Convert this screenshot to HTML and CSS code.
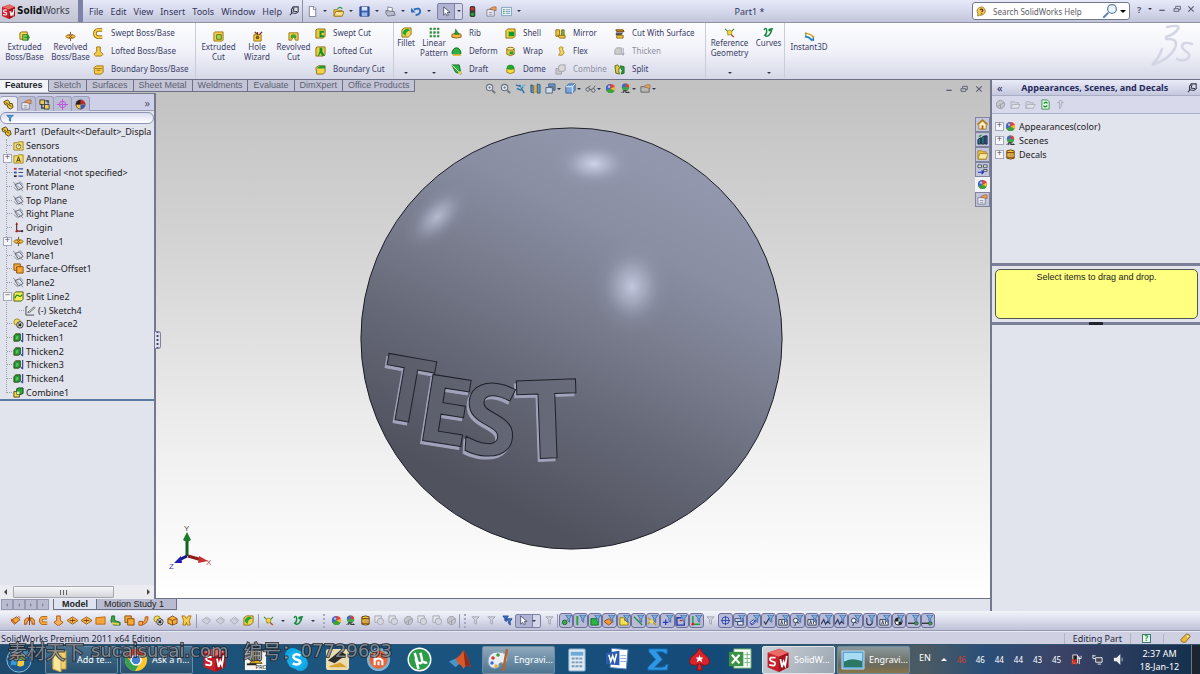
FILE: index.html
```html
<!DOCTYPE html>
<html lang="en">
<head>
<meta charset="utf-8">
<title>SolidWorks - Part1</title>
<link rel="stylesheet" href="styles.css">
</head>
<body>
<svg class="defs" aria-hidden="true">
  <symbol id="ext" viewBox="0 0 12 12"><path d="M1 2l2-1h6v6l-2 2H1z" fill="#f6d85a" stroke="#8c6b12"/><path d="M4 4h6v6H4z" fill="#8fce4a" stroke="#3c7a1c"/><path d="M6 7h5M9 5l2 2-2 3" fill="none" stroke="#1a8f2a" stroke-width="1.5"/></symbol>
  <symbol id="rev" viewBox="0 0 12 12"><path d="M6 1v10" stroke="#6b4b10"/><ellipse cx="6" cy="6" rx="5" ry="2" fill="#f3c23a" stroke="#a0660f"/><path d="M4 4l4 4M8 4L4 8" stroke="#8c4a10"/></symbol>
  <symbol id="swept" viewBox="0 0 12 12"><path d="M10 2H6a4 4 0 000 8h4" fill="none" stroke="#9b7412" stroke-width="4"/><path d="M10 2H6a4 4 0 000 8h4" fill="none" stroke="#f8d048" stroke-width="2.2"/></symbol>
  <symbol id="loft" viewBox="0 0 12 12"><path d="M4 1h4v5l3 3-2 2H3L1 9l3-3z" fill="#f6cd4a" stroke="#9b7412"/></symbol>
  <symbol id="bound" viewBox="0 0 12 12"><path d="M1 4l3-2h7v7l-2 2H2z" fill="#f6cd4a" stroke="#9b7412"/><path d="M2 5h8M4 7h4" stroke="#9b7412"/></symbol>
  <symbol id="excut" viewBox="0 0 12 12"><path d="M1 2l1-1h9v9l-1 1H1z" fill="#f6cd4a" stroke="#9b7412"/><path d="M4 4h5v5H4z" fill="#a8d84c" stroke="#4a7a1c"/></symbol>
  <symbol id="hole" viewBox="0 0 12 12"><path d="M2 4h8v7H2z" fill="#f6cd4a" stroke="#9b7412"/><circle cx="6" cy="7" r="2" fill="#7a5a10"/><path d="M6 1v3M8 4l3-3M3 1l2 2" stroke="#7a2b1a" stroke-width="1.4"/></symbol>
  <symbol id="revcut" viewBox="0 0 12 12"><path d="M1 2h10v8H8L7 7H5l-1 3H1z" fill="#f6cd4a" stroke="#9b7412"/><path d="M3 5q3-3 6 0v3H7L6 6 5 8H3z" fill="#35a832"/></symbol>
  <symbol id="swcut" viewBox="0 0 12 12"><path d="M1 2l2-1h8v8l-2 2H1z" fill="#f2c83c" stroke="#8c6b12"/><path d="M10 4H6v5h4" fill="none" stroke="#169430" stroke-width="2.2"/></symbol>
  <symbol id="locut" viewBox="0 0 12 12"><path d="M1 2l2-1h8v8l-2 2H1z" fill="#e8cf3c" stroke="#8c6b12"/><path d="M5 2h3v4l3 5H8L6 8l-2 3H3l2-5z" fill="#14912c"/></symbol>
  <symbol id="bocut" viewBox="0 0 12 12"><path d="M1 4l3-2h7v7l-2 2H2z" fill="#f2d24a" stroke="#8c6b12"/><path d="M2 5l3-3h6v3z" fill="#1f9e38"/></symbol>
  <symbol id="fillet" viewBox="0 0 12 12"><path d="M1 3l3-2h7v7l-3 3H1z" fill="#f2d24a" stroke="#8c6b12"/><path d="M2 7q0-5 6-5l2 2q-5 0-5 6z" fill="#1fa838"/></symbol>
  <symbol id="pat" viewBox="0 0 12 12"><path d="M1 1h2v2H1zM5 1h2v2H5zM9 1h2v2H9zM1 5h2v2H1zM5 5h2v2H5zM9 5h2v2H9zM1 9h2v2H1zM5 9h2v2H5zM9 9h2v2H9z" fill="#2f8e36" stroke="#2f8e36" stroke-width=".5"/></symbol>
  <symbol id="rib" viewBox="0 0 12 12"><path d="M1 7l5-2 5 2v3l-5 1-5-1z" fill="#f2b93c" stroke="#8c5b12"/><path d="M5 1l4 6H4z" fill="#22a03a" stroke="#146020" stroke-width=".5"/></symbol>
  <symbol id="deform" viewBox="0 0 12 12"><path d="M1 8q1-6 5-6t5 6l-3 2H3z" fill="#2db043" stroke="#156b25"/><path d="M1 9h10v2H3z" fill="#f2b93c"/></symbol>
  <symbol id="draft" viewBox="0 0 12 12"><path d="M1 1h8l2 10-6-2z" fill="#2db043" stroke="#156b25"/><path d="M1 1l9 9" stroke="#e8f0b0"/><path d="M8 8h3v3H8z" fill="#f2d24a"/></symbol>
  <symbol id="shell" viewBox="0 0 12 12"><path d="M1 3l2-2h8v8l-2 2H1z" fill="#f2d03c" stroke="#8c6b12"/><path d="M4 4h6v5H4z" fill="#129a2a"/></symbol>
  <symbol id="wrap" viewBox="0 0 12 12"><path d="M2 3v6q4 3 8 0V3z" fill="#f2d03c" stroke="#8c6b12"/><ellipse cx="6" cy="3" rx="4" ry="1.6" fill="#fbeaa0" stroke="#8c6b12"/><path d="M5 6h4v3H5z" fill="#1f9e38"/></symbol>
  <symbol id="dome" viewBox="0 0 12 12"><path d="M2 5v4q4 3 8 0V5z" fill="#f8dc3c" stroke="#a07b12"/><path d="M2 5q0-4 4-4t4 4q-4 2-8 0z" fill="#1faa30" stroke="#157024" stroke-width=".5"/></symbol>
  <symbol id="mirror" viewBox="0 0 12 12"><path d="M1 2h4v7H1z" fill="#f2c83c" stroke="#8c6b12"/><path d="M7 2h3v7H7z" fill="#6cba3a" stroke="#8c6b12"/><path d="M3 8h8v3H5z" fill="#f2c83c" stroke="#8c6b12"/></symbol>
  <symbol id="flex" viewBox="0 0 12 12"><path d="M8 1q-5 0-3 3t-1 6h4q3-3 1-5t0-3z" fill="#f8d860" stroke="#a88418"/></symbol>
  <symbol id="comb" viewBox="0 0 12 12"><path d="M1 5h6v6H1z" fill="#ccc" stroke="#a0a0a8"/><path d="M4 2l2-1h5v6l-2 1H4z" fill="#d8d8dc" stroke="#a0a0a8"/></symbol>
  <symbol id="cuts" viewBox="0 0 12 12"><path d="M2 2h8l1 2H3z" fill="#d8902c" stroke="#70450c"/><path d="M2 5h8l-2 3H2z" fill="#555"/><path d="M3 8h7v3H3z" fill="#f2c83c" stroke="#8c6b12"/></symbol>
  <symbol id="thk0" viewBox="0 0 12 12"><path d="M1 4l2-2h5v7H1z" fill="#ccc" stroke="#a4a4ac"/><path d="M10 2v8l-1-2m1 2l1-2" stroke="#99a" fill="none"/></symbol>
  <symbol id="split" viewBox="0 0 12 12"><path d="M1 2l3-1 2 3-1 3 1 4-4-1z" fill="#e6c83a" stroke="#5a6b12"/><path d="M7 2l4 1v7l-3 1 1-4-2-3z" fill="#2ba43a" stroke="#1a6a1a"/></symbol>
  <symbol id="refg" viewBox="0 0 12 12"><path d="M1 2l9 8M11 2L4 9" stroke="#2f8f46" stroke-width="1.2"/><circle cx="6" cy="6" r="2.6" fill="#f4d23c" stroke="#a58012" stroke-width=".7"/><path d="M8 9l3 2" stroke="#d04a2c" stroke-width="1.4"/></symbol>
  <symbol id="curv" viewBox="0 0 12 12"><path d="M1 3q3-3 3 1t-2 5q3 3 6-2t-1-3q-2-2 4-2" fill="none" stroke="#14883a" stroke-width="1.6"/></symbol>
  <symbol id="i3d" viewBox="0 0 12 12"><path d="M1 2l6 2 4 3" stroke="#e0a020" stroke-width="1.6" fill="none"/><path d="M1 6l4 1 4 3" stroke="#2a88c8" stroke-width="2" fill="none"/><path d="M7 10l4 1V7z" fill="#2a78b8"/><path d="M2 2v4M10 6v2" stroke="#3a9a3a"/></symbol>
  <symbol id="doc" viewBox="0 0 12 12"><path d="M2.500.5h5l2 2v9h-7z" fill="#fff" stroke="#7a7f96"/><path d="M7 1v3h3" fill="none" stroke="#7a7f96"/></symbol>
  <symbol id="open" viewBox="0 0 12 12"><path d="M1 4h4l1 1h4v6H1z" fill="#f0c040" stroke="#a07b20"/><path d="M1 11l2-5h9l-2 5z" fill="#fae08a" stroke="#a07b20"/><path d="M5 3q3-3 5 0" stroke="#2aa040" stroke-width="1.5" fill="none"/></symbol>
  <symbol id="save" viewBox="0 0 12 12"><path d="M1 1h10v10H1z" fill="#3560b8" stroke="#1d3c80"/><path d="M3 1h6v4H3z" fill="#d8e4f8"/><path d="M3 7h6v4H3z" fill="#9db8e8"/></symbol>
  <symbol id="print" viewBox="0 0 12 12"><path d="M3 1l5 1v4H3z" fill="#fff" stroke="#7c8196"/><path d="M1 5l9 1 1 4-8 1-2-3z" fill="#b8bccb" stroke="#6c7186"/></symbol>
  <symbol id="undo" viewBox="0 0 12 12"><path d="M3 4q7-3 7 2 0 3-5 4" fill="none" stroke="#2b6cb8" stroke-width="2"/><path d="M0 2v5h5z" fill="#2b6cb8"/></symbol>
  <symbol id="cur" viewBox="0 0 12 12"><path d="M4 1v9l2-2 2 3 1-1-1-3h3z" fill="#fff" stroke="#454b66" stroke-width=".9"/></symbol>
  <symbol id="light" viewBox="0 0 12 12"><rect x="3" y="0" width="6" height="12" rx="2" fill="#3a3a34"/><circle cx="6" cy="3" r="2" fill="#d83020"/><circle cx="6" cy="9" r="2" fill="#28a038"/></symbol>
  <symbol id="prop" viewBox="0 0 12 12"><path d="M1 4h8v7H1z" fill="#f4f4f8" stroke="#7a7f98"/><path d="M4 3q4-3 7-2v4l-5-1z" fill="#e8a060" stroke="#98582a" stroke-width=".7"/><path d="M3 7h4M3 9h4" stroke="#8a8fa8"/></symbol>
  <symbol id="list" viewBox="0 0 12 12"><path d="M.5 1.500h11v9H.5z" fill="#eaf3f6" stroke="#7ba0b8"/><path d="M2 4h2M2 6h2M2 8h2" stroke="#3a8a5a"/><path d="M5 4h5M5 6h5M5 8h5" stroke="#7ba0b8"/></symbol>
  <symbol id="pin" viewBox="0 0 12 12"><path d="M5 1h6v6L8 9 3 8V4z" fill="#dcdfe8" stroke="#33384e" stroke-width="1.300"/><path d="M6 2l-1 4 5 1M4 8l-3 3" fill="none" stroke="#33384e" stroke-width="1.300"/></symbol>
  <symbol id="mag" viewBox="0 0 12 12"><circle cx="5" cy="5" r="3.500" fill="#dfe3ea" stroke="#6b7282" stroke-width="1.200"/><path d="M3.500 5h3M5 3.500v3" stroke="#6b7282" stroke-width=".8"/><path d="M8 8l3 3" stroke="#6b7282" stroke-width="2"/></symbol>
  <symbol id="magl" viewBox="0 0 12 12"><circle cx="8" cy="4" r="3.500" fill="#eaf5fb" stroke="#5f84a8"/><path d="M5 7l-4 4" stroke="#5f84a8" stroke-width="1.6"/></symbol>
  <symbol id="prev" viewBox="0 0 12 12"><path d="M1 2l8 3M5 2l5 9M2 6l5 2" stroke="#2f78a8" stroke-width="1.6"/><path d="M6 5l5-3" stroke="#74b4d4" stroke-width="2"/></symbol>
  <symbol id="sect" viewBox="0 0 12 12"><path d="M1 2l3 1v8l-3-1z" fill="#4a8fc0" stroke="#2f5a80"/><path d="M4 2h4v9H4z" fill="#e0a848"/><path d="M8 1l3 1v9H8z" fill="#5ca0cc" stroke="#2f5a80"/></symbol>
  <symbol id="cube" viewBox="0 0 12 12"><path d="M1 4l3-3h7v7l-3 3H1z" fill="#7ba6dc" stroke="#3b5f90"/><path d="M1 4h7v7M8 4l3-3" fill="none" stroke="#e8f2fc"/></symbol>
  <symbol id="views" viewBox="0 0 12 12"><path d="M1 5h7v6H1z" fill="#cfdcec" stroke="#4a6080"/><path d="M4 1h7v7H9V4H4z" fill="#6b94c8" stroke="#4a6080"/></symbol>
  <symbol id="glas" viewBox="0 0 12 12"><circle cx="3" cy="7" r="2" fill="none" stroke="#5a6070"/><circle cx="9" cy="8" r="2" fill="none" stroke="#5a6070"/><path d="M5 7h2M3 5l3-2M9 6l2-3" stroke="#5a6070"/></symbol>
  <symbol id="ball" viewBox="0 0 12 12"><circle cx="6" cy="6" r="5" fill="#e8402c"/><path d="M6 1a5 5 0 00-4.300 7.500L6 6z" fill="#3a6ad0"/><path d="M1.700 8.500A5 5 0 0010.300 8.500L6 6z" fill="#2fa83c"/><path d="M6 6l4.300 2.500A5 5 0 0010.500 4z" fill="#f0c030"/><circle cx="4.500" cy="4" r="1.300" fill="#fff" opacity=".6"/></symbol>
  <symbol id="scene" viewBox="0 0 12 12"><circle cx="6" cy="4.500" r="4" fill="#3aa848"/><path d="M6 .5a4 4 0 014 4H6z" fill="#e04030"/><path d="M2 4.500a4 4 0 014-4v4z" fill="#3c68d0"/><path d="M1 11l3-3h4l3 3z" fill="#333"/><path d="M4 10h2M7 9h2M2 10h1" stroke="#fff"/></symbol>
  <symbol id="decal" viewBox="0 0 12 12"><path d="M2 2q4-2 8 0v8q-4 2-8 0z" fill="#f0c53a" stroke="#5a3a10"/><path d="M2 4h8M2 9h8" stroke="#8a4a18" stroke-width="1.200"/><path d="M4 5h5v3H4z" fill="#c8a850"/></symbol>
  <symbol id="vset" viewBox="0 0 12 12"><path d="M1 4h9v6H1z" fill="#b8b8b8" stroke="#666"/><path d="M4 4q3-3 7-2v4z" fill="#e0a870" stroke="#946038" stroke-width=".7"/></symbol>
  <symbol id="part" viewBox="0 0 12 12"><path d="M1 3l4-2 2 2v2h3l1 4-3 2-3-2V7L2 6z" fill="#f0c63a" stroke="#51400c"/><path d="M3 4l3 2 3 2" stroke="#51400c" fill="none"/></symbol>
  <symbol id="conf" viewBox="0 0 12 12"><path d="M1 1h5v5H1zM6 6h5v5H6z" fill="#f0cf50" stroke="#444"/><path d="M3 6v4h3M7 2h3v3" fill="none" stroke="#333" stroke-width="1.300"/></symbol>
  <symbol id="dimx" viewBox="0 0 12 12"><circle cx="6" cy="6" r="3.500" fill="none" stroke="#c050d8"/><path d="M6 0v12M0 6h12" stroke="#c050d8"/></symbol>
  <symbol id="disp" viewBox="0 0 12 12"><circle cx="6" cy="6" r="5" fill="#f0c840" stroke="#222" stroke-width=".7"/><path d="M1 6a5 5 0 0110 0z" fill="#c82828"/><path d="M1 6a5 5 0 015-5v5z" fill="#222"/><path d="M6 6v5a5 5 0 005-5z" fill="#3658c0"/></symbol>
  <symbol id="fun" viewBox="0 0 12 12"><path d="M1 2h10L7 6v5l-2-1V6z" fill="#4aa0dc" stroke="#1e5f98"/></symbol>
  <symbol id="sens" viewBox="0 0 12 12"><path d="M1 3h4l1-1h5v9H1z" fill="#f4dc70" stroke="#a08420"/><circle cx="6" cy="7" r="2.500" fill="#fff6c8" stroke="#80681c"/><path d="M6 7l1-2" stroke="#333"/></symbol>
  <symbol id="anno" viewBox="0 0 12 12"><path d="M1 3h4l1-1h5v9H1z" fill="#f8e060" stroke="#a08420"/><path d="M4 10l2-6 2 6M4.500 8h3" fill="none" stroke="#3a3210"/></symbol>
  <symbol id="mat" viewBox="0 0 12 12"><path d="M1 1h3v2H1z" fill="#c03030"/><path d="M1 5h3v2H1z" fill="#30509a"/><path d="M1 9h3v2H1z" fill="#303030"/><path d="M6 2h5M6 6h5M6 10h5" stroke="#3a4a9a" stroke-width="1.300"/></symbol>
  <symbol id="plane" viewBox="0 0 12 12"><path d="M2 4l5-2 4 5-5 3z" fill="none" stroke="#555c6a"/><path d="M0 1l11 10M1 7l4 4M7 0l4 4" stroke="#6a7280" stroke-width=".8"/></symbol>
  <symbol id="orig" viewBox="0 0 12 12"><path d="M4 2v8h6" fill="none" stroke="#5a2028" stroke-width="1.200"/><path d="M2.500 3L4 0l1.500 3z" fill="#b02020"/><circle cx="4" cy="10" r="1.300" fill="#b02020"/><circle cx="10" cy="10" r="1.200" fill="#333"/></symbol>
  <symbol id="surf" viewBox="0 0 12 12"><path d="M1 1h7v7H1z" fill="#f0b040" stroke="#8a4a10"/><path d="M4 4h7v7H4z" fill="#f8a830" stroke="#8a4a10"/></symbol>
  <symbol id="spl" viewBox="0 0 12 12"><path d="M1 3l2-2h8v8l-2 2H1z" fill="#f4ec50" stroke="#4a5a10"/><path d="M2 8q2-5 4-3t4-1" fill="none" stroke="#1a8a2a" stroke-width="1.400"/></symbol>
  <symbol id="sk" viewBox="0 0 12 12"><path d="M3 2H1v9h9" fill="none" stroke="#444"/><path d="M3 8l7-6 1 1-6 5z" fill="#fff" stroke="#444" stroke-width=".8"/></symbol>
  <symbol id="delf" viewBox="0 0 12 12"><circle cx="4.500" cy="4.500" r="3.500" fill="#f4dc60" stroke="#9a8420"/><circle cx="7.500" cy="7.500" r="3.500" fill="#e8e8e8" stroke="#333"/><path d="M6 6l3 3M9 6L6 9" stroke="#222" stroke-width="1.200"/></symbol>
  <symbol id="thk" viewBox="0 0 12 12"><path d="M1 4l2-2h5v7l-2 1H1z" fill="#1f9a34" stroke="#3a4510"/><path d="M3 5l3-1v3L3 9z" fill="#54c060"/><path d="M10.500 1v10M9 9l1.500 2" stroke="#3450a8" stroke-width="1.400"/></symbol>
  <symbol id="cmb" viewBox="0 0 12 12"><path d="M1 5h6v6H1z" fill="#f4d850" stroke="#5a4510"/><path d="M4 2l2-1h5v6l-2 1H4z" fill="#29a33c" stroke="#124a1c"/><path d="M4 5h3v3H4z" fill="#e8f0a0"/></symbol>
  <symbol id="home" viewBox="0 0 12 12"><path d="M2 6v5h8V6L6 2z" fill="#fff0c0" stroke="#9a7420"/><path d="M0 6l6-5 6 5" fill="none" stroke="#b08020" stroke-width="1.400"/><path d="M5 7h2v4H5z" fill="#a06020"/></symbol>
  <symbol id="lib" viewBox="0 0 12 12"><path d="M1 6l3-2v7H1zM5 4l3-2v9H5z" fill="#1d7a8a" stroke="#20283a"/><path d="M9 2h2v9H9z" fill="#3a5ab8" stroke="#20283a"/><path d="M2 3l3-2" stroke="#2a9a40" stroke-width="1.500"/></symbol>
  <symbol id="fold" viewBox="0 0 12 12"><path d="M1 2h4l1 1h4v8H1z" fill="#e8c050" stroke="#a88428"/><path d="M1 11l2-6h9l-2 6z" fill="#fbe8a0" stroke="#a88428"/></symbol>
  <symbol id="pal" viewBox="0 0 12 12"><path d="M1 1h4v3H1zM7 1h4v3H7zM7 6h4v2H7z" fill="#f0e8b0" stroke="#445078"/><path d="M1 9h6M5 7l2 2-2 2" fill="none" stroke="#2030c0" stroke-width="1.300"/></symbol>
  <symbol id="gf" viewBox="0 0 12 12"><path d="M1 3h4l1 1h3v6H1z" fill="#d2d3dc" stroke="#aeb0bd"/><path d="M1 10l2-4h8l-2 4z" fill="#e4e5ec" stroke="#aeb0bd"/></symbol>
  <symbol id="gb" viewBox="0 0 12 12"><circle cx="6" cy="6" r="4.500" fill="#c4c5cd" stroke="#9c9eaa"/><path d="M6 6l4-2M6 6L2 9M6 6v4" stroke="#9c9eaa"/></symbol>
  <symbol id="ref" viewBox="0 0 12 12"><path d="M2 1h6l2 2v8H2z" fill="#e8f8ea" stroke="#3a8a4a"/><path d="M4 5q3-3 4 0M8 7q-3 3-4 0" fill="none" stroke="#169430" stroke-width="1.500"/></symbol>
  <symbol id="up" viewBox="0 0 12 12"><path d="M5 11V4H3l3-3 3 3H7v4z" fill="#d4d5dc" stroke="#aaacb8"/></symbol>
  <symbol id="o1" viewBox="0 0 12 12"><path d="M1 6l6-4 4 3-6 5z" fill="#f4a43a" stroke="#9a4a10"/><path d="M1 4l5 5M9 1l2 2" stroke="#c03818"/></symbol>
  <symbol id="o2" viewBox="0 0 12 12"><path d="M0 10q0-7 5-7v3q-2 0-2 4zM12 10q0-7-5-7v3q2 0 2 4z" fill="#f4a43a" stroke="#9a4a10"/><path d="M6 0v11" stroke="#7a2a10"/></symbol>
  <symbol id="o3" viewBox="0 0 12 12"><path d="M10 3H6a3 3 0 000 6h4" fill="none" stroke="#a8550e" stroke-width="3.800"/><path d="M10 3H6a3 3 0 000 6h4" fill="none" stroke="#f9ab3c" stroke-width="2"/></symbol>
  <symbol id="o4" viewBox="0 0 12 12"><path d="M4 1h4v5l3 2-5 4-5-4 3-2z" fill="#f6b058" stroke="#a8550e"/></symbol>
  <symbol id="o5" viewBox="0 0 12 12"><path d="M0 6l6-4 6 4-6 4z" fill="#f8b848" stroke="#9a5a10"/><path d="M3 6h6M6 4v4" stroke="#7a3a10"/></symbol>
  <symbol id="o6" viewBox="0 0 12 12"><path d="M1 3l10-1v8H1z" fill="#f8a43a" stroke="#b86812"/></symbol>
  <symbol id="o7" viewBox="0 0 12 12"><path d="M2 1h3v5l6 2v3H4L1 7z" fill="#34a844" stroke="#1c6a28"/><path d="M2 9l8 1" stroke="#f8c848" stroke-width="2"/></symbol>
  <symbol id="o8" viewBox="0 0 12 12"><path d="M2 9q6 0 6-7h3q0 9-9 9z" fill="#f8a43a" stroke="#a8550e"/><path d="M1 7h4v4H1z" fill="#f8b858" stroke="#a8550e"/></symbol>
  <symbol id="o9" viewBox="0 0 12 12"><path d="M1 4l5-3 5 3v5l-5 2-5-2z" fill="#f4b03a" stroke="#8a4a10"/><path d="M1 4l5 2 5-2M6 6v5" fill="none" stroke="#8a4a10"/></symbol>
  <symbol id="o10" viewBox="0 0 12 12"><path d="M1 1h3l2 3 2-3h3L9 6l1 5H7L6 8l-1 3H2l1-5z" fill="#fbcf4a" stroke="#a8750e"/></symbol>
  <symbol id="g1" viewBox="0 0 12 12"><path d="M1 6l4-3 5 4-4 3zM6 2l5 4" fill="#d0d1da" stroke="#a9abb8"/></symbol>
  <symbol id="g2" viewBox="0 0 12 12"><path d="M1 1h7v7H1z" fill="#e4e4ec" stroke="#a4a6b4"/><circle cx="7" cy="7" r="3.500" fill="#d4d5de" stroke="#a4a6b4"/></symbol>
  <symbol id="gfun" viewBox="0 0 12 12"><path d="M2 2h8L7 5v5L5 9V5z" fill="#d4d6e0" stroke="#a4a6b4"/></symbol>
  <symbol id="bfun" viewBox="0 0 12 12"><path d="M1 1h6L5 4v3L3 6V4zM5 4h6L9 7v4L7 9V7z" fill="#3c78c8" stroke="#1c3c88" stroke-width=".8"/></symbol>
  <symbol id="f" viewBox="0 0 12 12"><path d="M5 0h7L9.500 3.500V8L7.500 6.500v-3z" fill="#76b4e4" stroke="#3a5a98" stroke-width=".8"/></symbol>
  <symbol id="f1" viewBox="0 0 12 12"><circle cx="4" cy="8" r="2.500" fill="#36b04a" stroke="#1c5c28"/><use href="#f"/></symbol>
  <symbol id="f2" viewBox="0 0 12 12"><path d="M2.500 1v10" stroke="#22a038" stroke-width="2"/><use href="#f"/></symbol>
  <symbol id="f3" viewBox="0 0 12 12"><path d="M1 4h8v7H1z" fill="#28b83c" stroke="#167024"/><use href="#f"/></symbol>
  <symbol id="f4" viewBox="0 0 12 12"><path d="M0 7l5-3 5 3-5 4z" fill="#f49a30" stroke="#9a4a10"/><use href="#f"/></symbol>
  <symbol id="f5" viewBox="0 0 12 12"><path d="M1 3h5v3h4v5H1z" fill="#f4e050" stroke="#907a18"/><use href="#f"/></symbol>
  <symbol id="f6" viewBox="0 0 12 12"><path d="M1 2l9 9" stroke="#2a8a44" stroke-width="1.500"/><use href="#f"/></symbol>
  <symbol id="f7" viewBox="0 0 12 12"><path d="M1 3l9 8M1 10l5-5" stroke="#b8a018" stroke-width="1.500"/><circle cx="5" cy="7" r="2" fill="#f4e050"/><use href="#f"/></symbol>
  <symbol id="f8" viewBox="0 0 12 12"><path d="M1 8h6M4 5v6" stroke="#2438c8" stroke-width="1.300"/><use href="#f"/></symbol>
  <symbol id="f9" viewBox="0 0 12 12"><path d="M6 3H1v8h8V8" fill="none" stroke="#2438a8" stroke-width="1.500"/><path d="M4 6h3" stroke="#c02838" stroke-width="1.500"/><use href="#f"/></symbol>
  <symbol id="f10" viewBox="0 0 12 12"><path d="M2 1v9h8" fill="none" stroke="#22a038" stroke-width="1.600"/><circle cx="2" cy="10" r="1.500" fill="#c03020"/><use href="#f"/></symbol>
  <symbol id="f11" viewBox="0 0 12 12"><circle cx="6" cy="6" r="4" fill="none" stroke="#3048b0"/><path d="M6 1v10M1 6h10" stroke="#3048b0"/></symbol>
  <symbol id="f12" viewBox="0 0 12 12"><path d="M1 4h9v3H1zM4 7h6v4H4z" fill="#e4e8f4" stroke="#303c70"/><use href="#f"/></symbol>
  <symbol id="f13" viewBox="0 0 12 12"><path d="M1 8l4-3 2 3-4 3z" fill="#dfe4f8" stroke="#2438a8"/><path d="M2 10l8-6" stroke="#2438a8"/><use href="#f"/></symbol>
  <symbol id="f14" viewBox="0 0 12 12"><path d="M1 7l2 3 4-7" fill="none" stroke="#303c50" stroke-width="1.300"/><use href="#f"/></symbol>
  <symbol id="f15" viewBox="0 0 12 12"><path d="M1 5h9v6H1z" fill="#f4f4f8" stroke="#303848"/><path d="M3 10l1-4 1 4M7 6v4" stroke="#303848" fill="none"/><use href="#f"/></symbol>
  <symbol id="f16" viewBox="0 0 12 12"><circle cx="4" cy="6" r="2.500" fill="#f0f2f8" stroke="#303848"/><path d="M4 9l-1 3M5 8l3 1" stroke="#303848"/><use href="#f"/></symbol>
  <symbol id="f17" viewBox="0 0 12 12"><path d="M0 10l3-5 2 5 2-3 3 3" fill="none" stroke="#303c60" stroke-width="1.300"/><use href="#f"/></symbol>
  <symbol id="f18" viewBox="0 0 12 12"><path d="M3 3v5q0 3 3 3t3-3V6" fill="none" stroke="#303c60" stroke-width="1.300"/><use href="#f"/></symbol>
  <symbol id="f19" viewBox="0 0 12 12"><circle cx="6" cy="7" r="4" fill="#fff" stroke="#222"/><path d="M6 3v4H2a4 4 0 014-4zM6 7h4a4 4 0 01-4 4z" fill="#222"/><use href="#f"/></symbol>
  <symbol id="f20" viewBox="0 0 12 12"><path d="M0 9h11" stroke="#222" stroke-width="1.300"/><circle cx="9" cy="9" r="2" fill="#38a848" stroke="#222" stroke-width=".6"/><use href="#f"/></symbol>
  <symbol id="min" viewBox="0 0 12 12"><path d="M2 8h8" stroke="#5c6075" stroke-width="2"/></symbol>
  <symbol id="rest" viewBox="0 0 12 12"><path d="M4 5V2h7v5H9" fill="none" stroke="#5c6075" stroke-width="1.400"/><path d="M1.500 5.500h7v4h-7z" fill="none" stroke="#5c6075" stroke-width="1.400"/></symbol>
  <symbol id="x" viewBox="0 0 12 12"><path d="M2 2l8 8M10 2l-8 8" stroke="#5c6075" stroke-width="1.800"/></symbol>
  <symbol id="sw" viewBox="0 0 30 30"><path d="M2 6L17 1l11 5v18l-12 6L2 24z" fill="#c8202a"/><path d="M2 6l15-5 11 5-12 5z" fill="#ea6a66"/><path d="M16 11l12-5v18l-12 6z" fill="#a3141e"/><path d="M12 12H6q-2 2 0 4l5 2q1 4-2 4l-5-1M18 14l2 10 2-7 2 5 2-12" fill="none" stroke="#fff" stroke-width="2.200"/></symbol>
</svg>

<header class="titlebar">
  <div class="brand"><svg class="i14"><use href="#sw"/></svg><span><b>Solid</b>Works</span></div>
  <nav class="menu">
    <button>File</button><button>Edit</button><button>View</button><button>Insert</button><button>Tools</button><button>Window</button><button>Help</button>
    <button aria-label="Pin menu"><svg class="i10"><use href="#pin"/></svg></button>
  </nav>
  <div class="quick">
    <button aria-label="New"><svg class="i"><use href="#doc"/></svg><i class="caret"></i></button>
    <button aria-label="Open"><svg class="i"><use href="#open"/></svg><i class="caret"></i></button>
    <button aria-label="Save"><svg class="i"><use href="#save"/></svg><i class="caret"></i></button>
    <button aria-label="Print"><svg class="i"><use href="#print"/></svg><i class="caret"></i></button>
    <button aria-label="Undo"><svg class="i"><use href="#undo"/></svg><i class="caret"></i></button>
    <button class="selectbtn" aria-label="Select"><svg class="i"><use href="#cur"/></svg><i class="caret"></i></button>
    <button class="solo" aria-label="Rebuild"><svg class="i"><use href="#light"/></svg></button>
    <button class="solo" aria-label="File properties"><svg class="i"><use href="#prop"/></svg></button>
    <button aria-label="Options"><svg class="i"><use href="#list"/></svg><i class="caret"></i></button>
  </div>
  <h1 class="doc">Part1 *</h1>
  <form class="search">
    <svg class="i" viewBox="0 0 12 12"><path d="M6 1a5 4.500 0 11-2 9l-2 1V8A5 4.500 0 016 1z" fill="#f4cc58" stroke="#a07820"/><path d="M4.500 4.500q1.500-2 3 0 0 1-1.500 2M6 8v1" fill="none" stroke="#6a2a20" stroke-width="1.300"/></svg>
    <input type="text" aria-label="Search SolidWorks Help" placeholder="Search SolidWorks Help">
    <button type="button" aria-label="Search"><svg class="i16"><use href="#magl"/></svg><i class="caret dark"></i></button>
  </form>
  <div class="winctl">
    <button class="help" aria-label="Help">?</button><i class="caret"></i>
    <button aria-label="Minimize"><svg class="i8"><use href="#min"/></svg></button><button aria-label="Restore"><svg class="i8"><use href="#rest"/></svg></button><button aria-label="Close"><svg class="i8"><use href="#x"/></svg></button>
  </div>
</header>

<section class="ribbon" aria-label="Features">
  <button class="big low"><svg class="i"><use href="#ext"/></svg><span>Extruded<br>Boss/Base</span></button>
  <button class="big low"><svg class="i"><use href="#rev"/></svg><span>Revolved<br>Boss/Base</span></button>
  <div class="col end">
    <button><svg class="i"><use href="#swept"/></svg>Swept Boss/Base</button>
    <button><svg class="i"><use href="#loft"/></svg>Lofted Boss/Base</button>
    <button><svg class="i"><use href="#bound"/></svg>Boundary Boss/Base</button>
  </div>
  <button class="big low"><svg class="i"><use href="#excut"/></svg><span>Extruded<br>Cut</span></button>
  <button class="big low"><svg class="i"><use href="#hole"/></svg><span>Hole<br>Wizard</span></button>
  <button class="big low"><svg class="i"><use href="#revcut"/></svg><span>Revolved<br>Cut</span></button>
  <div class="col end">
    <button><svg class="i"><use href="#swcut"/></svg>Swept Cut</button>
    <button><svg class="i"><use href="#locut"/></svg>Lofted Cut</button>
    <button><svg class="i"><use href="#bocut"/></svg>Boundary Cut</button>
  </div>
  <button class="big"><svg class="i"><use href="#fillet"/></svg><span>Fillet</span><i class="caret"></i></button>
  <button class="big"><svg class="i"><use href="#pat"/></svg><span>Linear<br>Pattern</span><i class="caret"></i></button>
  <div class="col">
    <button><svg class="i"><use href="#rib"/></svg>Rib</button>
    <button><svg class="i"><use href="#deform"/></svg>Deform</button>
    <button><svg class="i"><use href="#draft"/></svg>Draft</button>
  </div>
  <div class="col">
    <button><svg class="i"><use href="#shell"/></svg>Shell</button>
    <button><svg class="i"><use href="#wrap"/></svg>Wrap</button>
    <button><svg class="i"><use href="#dome"/></svg>Dome</button>
  </div>
  <div class="col">
    <button><svg class="i"><use href="#mirror"/></svg>Mirror</button>
    <button><svg class="i"><use href="#flex"/></svg>Flex</button>
    <button disabled><svg class="i"><use href="#comb"/></svg>Combine</button>
  </div>
  <div class="col end">
    <button><svg class="i"><use href="#cuts"/></svg>Cut With Surface</button>
    <button disabled><svg class="i"><use href="#thk0"/></svg>Thicken</button>
    <button><svg class="i"><use href="#split"/></svg>Split</button>
  </div>
  <button class="big"><svg class="i"><use href="#refg"/></svg><span>Reference<br>Geometry</span><i class="caret"></i></button>
  <button class="big endb"><svg class="i"><use href="#curv"/></svg><span>Curves</span><i class="caret"></i></button>
  <button class="big low"><svg class="i"><use href="#i3d"/></svg><span>Instant3D</span></button>
  <svg class="ds" viewBox="0 0 48 44" aria-hidden="true"><g fill="none" stroke="#d3d6e4" stroke-width="2.500" stroke-linecap="round"><path d="M18 3q14-3 11 2-3 5-12 8"/><path d="M17 15q13-1 9 9-5 11-23 17 7-7 10-16"/><path d="M43 20q-9-3-10 2 0 3 5 6 5 4 0 7-4 3-10 0"/></g></svg>
</section>

<main class="work">
  <div class="cmdtabs" role="tablist">
    <button role="tab" class="on">Features</button><button role="tab">Sketch</button><button role="tab">Surfaces</button><button role="tab">Sheet Metal</button><button role="tab">Weldments</button><button role="tab">Evaluate</button><button role="tab">DimXpert</button><button role="tab">Office Products</button>
  </div>

  <aside class="left">
    <div class="ptabs">
      <button class="on" aria-label="Feature tree"><svg class="i"><use href="#part"/></svg></button><button aria-label="Properties"><svg class="i"><use href="#prop"/></svg></button><button aria-label="Configurations"><svg class="i"><use href="#conf"/></svg></button><button aria-label="Dimensions"><svg class="i"><use href="#dimx"/></svg></button><button aria-label="Display"><svg class="i"><use href="#disp"/></svg></button>
      <span class="more">»</span>
    </div>
    <label class="filter"><svg class="i8"><use href="#fun"/></svg><input type="text" aria-label="Filter tree"></label>
    <ul class="tree">
      <li class="root"><svg class="i"><use href="#part"/></svg>Part1&nbsp; (Default&lt;&lt;Default&gt;_Displa</li>
      <li><svg class="i"><use href="#sens"/></svg>Sensors</li>
      <li class="plus"><svg class="i"><use href="#anno"/></svg>Annotations</li>
      <li><svg class="i"><use href="#mat"/></svg>Material &lt;not specified&gt;</li>
      <li><svg class="i"><use href="#plane"/></svg>Front Plane</li>
      <li><svg class="i"><use href="#plane"/></svg>Top Plane</li>
      <li><svg class="i"><use href="#plane"/></svg>Right Plane</li>
      <li><svg class="i"><use href="#orig"/></svg>Origin</li>
      <li class="plus"><svg class="i"><use href="#rev"/></svg>Revolve1</li>
      <li><svg class="i"><use href="#plane"/></svg>Plane1</li>
      <li><svg class="i"><use href="#surf"/></svg>Surface-Offset1</li>
      <li><svg class="i"><use href="#plane"/></svg>Plane2</li>
      <li class="plus minus"><svg class="i"><use href="#spl"/></svg>Split Line2</li>
      <li class="sub"><svg class="i"><use href="#sk"/></svg>(-) Sketch4</li>
      <li><svg class="i"><use href="#delf"/></svg>DeleteFace2</li>
      <li><svg class="i"><use href="#thk"/></svg>Thicken1</li>
      <li><svg class="i"><use href="#thk"/></svg>Thicken2</li>
      <li><svg class="i"><use href="#thk"/></svg>Thicken3</li>
      <li><svg class="i"><use href="#thk"/></svg>Thicken4</li>
      <li><svg class="i"><use href="#cmb"/></svg>Combine1</li>
    </ul>
    <div class="hscroll"><button aria-label="Scroll left" class="al"></button><span class="thumb"></span><button aria-label="Scroll right" class="ar"></button></div>
  </aside>

  <section class="view" aria-label="Model view">
    <svg class="model" viewBox="0 0 834 519">
      <defs>
        <linearGradient id="body" x1=".35" y1=".9" x2=".75" y2=".1"><stop offset="0" stop-color="#50525e"/><stop offset=".3" stop-color="#646775"/><stop offset=".55" stop-color="#787c8d"/><stop offset=".78" stop-color="#8a8ea3"/><stop offset="1" stop-color="#9397ad"/></linearGradient>
        <linearGradient id="cut" gradientUnits="userSpaceOnUse" x1="210" y1="0" x2="440" y2="0"><stop offset="0" stop-color="#585b67"/><stop offset="1" stop-color="#6a6d7c"/></linearGradient>
        <radialGradient id="hl"><stop offset="0" stop-color="#cdd3ea"/><stop offset=".35" stop-color="#bcc1d8" stop-opacity=".65"/><stop offset=".7" stop-color="#a4a8c0" stop-opacity=".18"/><stop offset="1" stop-color="#9ca0b8" stop-opacity="0"/></radialGradient>
      </defs>
      <circle cx="415.500" cy="259" r="211" fill="url(#body)" stroke="#1c1e26"/>
      <ellipse cx="438" cy="84" rx="42" ry="25" fill="url(#hl)"/>
      <ellipse cx="281" cy="137" rx="42" ry="23" fill="url(#hl)" opacity=".7" transform="rotate(-45 281 137)"/>
      <ellipse cx="476" cy="207" rx="40" ry="48" fill="url(#hl)" opacity=".85"/>
      <text class="engrave" x="220 258 304 361" y="337 360 374 380" rotate="10 9 4 -2"><tspan font-size="90">T</tspan><tspan font-size="94">E</tspan><tspan font-size="100">S</tspan><tspan font-size="110">T</tspan></text>
    </svg>
    <div class="hud">
      <button aria-label="Zoom to fit"><svg class="i"><use href="#mag"/></svg></button><button aria-label="Zoom to area"><svg class="i"><use href="#mag"/></svg></button><button aria-label="Previous view"><svg class="i"><use href="#prev"/></svg></button><button aria-label="Section view"><svg class="i"><use href="#sect"/></svg></button><button aria-label="View orientation"><svg class="i"><use href="#views"/></svg><i class="caret"></i></button><button aria-label="Display style"><svg class="i"><use href="#cube"/></svg><i class="caret"></i></button><button aria-label="Hide or show"><svg class="i"><use href="#glas"/></svg><i class="caret"></i></button><button aria-label="Edit appearance"><svg class="i"><use href="#ball"/></svg></button><button aria-label="Apply scene"><svg class="i"><use href="#scene"/></svg><i class="caret"></i></button><button aria-label="View settings"><svg class="i"><use href="#vset"/></svg><i class="caret"></i></button>
    </div>
    <div class="docctl"><button aria-label="Minimize document"><svg class="i8"><use href="#min"/></svg></button><button aria-label="Restore document"><svg class="i8"><use href="#rest"/></svg></button><button aria-label="Close document"><svg class="i8"><use href="#x"/></svg></button></div>
    <div class="tasktabs"><button aria-label="Resources"><svg class="i"><use href="#home"/></svg></button><button aria-label="Design library"><svg class="i"><use href="#lib"/></svg></button><button aria-label="File explorer"><svg class="i"><use href="#fold"/></svg></button><button aria-label="View palette"><svg class="i"><use href="#pal"/></svg></button><button class="on" aria-label="Appearances"><svg class="i"><use href="#ball"/></svg></button><button aria-label="Custom properties"><svg class="i"><use href="#prop"/></svg></button></div>
    <svg class="triad" viewBox="0 0 46 48">
      <path d="M19 31V13" stroke="#16601e" stroke-width="3"/><path d="M15 15l4-8 4 8q-4 3-8 0z" fill="#1c7a28"/>
      <path d="M20 31l14 4" stroke="#8a1c1c" stroke-width="3"/><path d="M31 31l9 5-10 2z" fill="#c83030"/>
      <path d="M19 31l-8 4" stroke="#14148a" stroke-width="3"/><path d="M13 31l-7 7 8 0z" fill="#1c1cb0"/>
      <text x="16" y="6" fill="#4a4a4a">Y</text><text x="38" y="40" fill="#b04848">X</text><text x="1" y="44" fill="#3a3ab0">Z</text>
    </svg>
    <button class="grip" aria-label="Resize panel"></button>
  </section>

  <aside class="right">
    <h2><span>«</span>Appearances, Scenes, and Decals<svg class="i10"><use href="#pin"/></svg></h2>
    <div class="rtools"><button aria-label="Appearance" disabled><svg class="i"><use href="#gb"/></svg></button><button aria-label="Folder" disabled><svg class="i"><use href="#gf"/></svg></button><button aria-label="New folder" disabled><svg class="i"><use href="#gf"/></svg></button><button aria-label="Refresh"><svg class="i"><use href="#ref"/></svg></button><button aria-label="Up" disabled><svg class="i"><use href="#up"/></svg></button></div>
    <ul class="rtree">
      <li><svg class="i"><use href="#ball"/></svg>Appearances(color)</li>
      <li><svg class="i"><use href="#scene"/></svg>Scenes</li>
      <li><svg class="i"><use href="#decal"/></svg>Decals</li>
    </ul>
    <p class="drop">Select items to drag and drop.</p>
    <div class="bar2"></div>
  </aside>
</main>

<div class="sheets">
  <div class="nav"><button aria-label="First"></button><button aria-label="Previous"></button><button class="fwd" aria-label="Next"></button><button class="fwd" aria-label="Last"></button></div>
  <button class="sheet on">Model</button><button class="sheet">Motion Study 1</button>
  <span class="edge"></span>
</div>

<div class="tools">
  <div class="set s13">
    <svg class="i"><use href="#o1"/></svg><svg class="i"><use href="#o2"/></svg><svg class="i"><use href="#o3"/></svg><svg class="i"><use href="#o4"/></svg><svg class="i"><use href="#o5"/></svg><svg class="i"><use href="#o5"/></svg><svg class="i"><use href="#o6"/></svg><svg class="i"><use href="#o7"/></svg><svg class="i"><use href="#surf"/></svg><svg class="i"><use href="#o8"/></svg><svg class="i"><use href="#delf"/></svg><svg class="i"><use href="#o9"/></svg><svg class="i"><use href="#o10"/></svg>
  </div>
  <div class="set s4"><svg class="i"><use href="#g1"/></svg><svg class="i"><use href="#g1"/></svg><svg class="i"><use href="#g1"/></svg><svg class="i"><use href="#fillet"/></svg></div>
  <div class="set s2"><svg class="i"><use href="#refg"/></svg><i class="caret"></i><svg class="i"><use href="#curv"/></svg><i class="caret"></i></div>
  <div class="set s9"><svg class="i"><use href="#ball"/></svg><svg class="i"><use href="#scene"/></svg><svg class="i"><use href="#decal"/></svg><svg class="i"><use href="#g2"/></svg><svg class="i"><use href="#g2"/></svg><svg class="i"><use href="#gb"/></svg><svg class="i"><use href="#g2"/></svg><svg class="i"><use href="#g2"/></svg><svg class="i"><use href="#gb"/></svg></div>
  <div class="set s3"><svg class="i"><use href="#gfun"/></svg><svg class="i"><use href="#gfun"/></svg><svg class="i"><use href="#bfun"/></svg></div>
  <button class="selectbtn" aria-label="Select"><svg class="i"><use href="#cur"/></svg><i class="caret"></i></button>
  <div class="set s1"><svg class="i"><use href="#gfun"/></svg></div>
  <div class="filters">
    <button aria-label="Vertices"><svg><use href="#f1"/></svg></button><button aria-label="Edges"><svg><use href="#f2"/></svg></button><button aria-label="Faces"><svg><use href="#f3"/></svg></button><button aria-label="Surfaces"><svg><use href="#f4"/></svg></button><button aria-label="Solids"><svg><use href="#f5"/></svg></button><button aria-label="Axes"><svg><use href="#f6"/></svg></button><button aria-label="Planes"><svg><use href="#f7"/></svg></button><button aria-label="Points"><svg><use href="#f8"/></svg></button><button aria-label="Sketches"><svg><use href="#f9"/></svg></button><button aria-label="Segments"><svg><use href="#f10"/></svg></button><button class="flat" aria-label="Midpoints"><svg><use href="#gfun"/></svg></button><button aria-label="Center marks"><svg><use href="#f11"/></svg></button><button aria-label="Centerlines"><svg><use href="#f12"/></svg></button><button aria-label="Dimensions"><svg><use href="#f13"/></svg></button><button aria-label="Finish"><svg><use href="#f14"/></svg></button><button aria-label="Tolerances"><svg><use href="#f15"/></svg></button><button aria-label="Notes"><svg><use href="#f16"/></svg></button><button aria-label="Datums"><svg><use href="#f15"/></svg></button><button aria-label="Welds"><svg><use href="#f17"/></svg></button><button aria-label="Beads"><svg><use href="#f17"/></svg></button><button aria-label="Targets"><svg><use href="#f16"/></svg></button><button aria-label="Threads"><svg><use href="#f18"/></svg></button><button aria-label="Blocks"><svg><use href="#f15"/></svg></button><button aria-label="Dowels"><svg><use href="#f19"/></svg></button><button aria-label="Connection points"><svg><use href="#f20"/></svg></button><button aria-label="Routing points"><svg><use href="#f20"/></svg></button>
  </div>
</div>

<footer class="status">
  <span class="grow">SolidWorks Premium 2011 x64 Edition</span>
  <span class="cell">Editing Part</span>
  <span class="cell q"><button aria-label="Quick tips">?</button></span>
  <svg class="i" viewBox="0 0 12 12"><path d="M1 7l6-6q4 0 4 3l-5 6q-5 1-5-3z" fill="#e8b840" stroke="#8a6818"/><circle cx="8.500" cy="3.500" r="1" fill="#fff"/></svg>
</footer>

<nav class="taskbar" aria-label="Taskbar">
  <button class="start" aria-label="Start"><svg viewBox="0 0 30 30"><circle cx="15" cy="15" r="13" fill="#1e5a8e" stroke="#8cc4e0"/><path d="M3 12a13 13 0 0124 0q-12 6-24 0z" fill="#7ab8dc" opacity=".5"/><path d="M8 9q3-2 6 0l-1 5q-3-2-6 0z" fill="#e8642c"/><path d="M15 9q3 2 7 0l-1 5q-4 2-7 0z" fill="#8ec43c"/><path d="M7 15q3-2 6 0l-1 6q-3-2-6 0z" fill="#3c9ae0"/><path d="M14 15q3 2 7 0l-1 6q-4 2-7 0z" fill="#f8cc3c"/></svg></button>
  <button class="task"><svg viewBox="0 0 24 24"><path d="M4 3h13v18H4z" fill="#f0d070" stroke="#b89838"/><path d="M4 3l8 4v17l-8-3z" fill="#fae79c" stroke="#c8a848"/></svg>Add te...</button>
  <button class="task"><svg viewBox="0 0 24 24"><circle cx="12" cy="12" r="11" fill="#fbc92e"/><path d="M2.500 6.500A11 11 0 0122 7H12a5 5 0 00-5 6z" fill="#de4132"/><path d="M2 7.500A11 11 0 0011 23l5-8.500A5 5 0 017 14z" fill="#35a150"/><circle cx="12" cy="12" r="5" fill="#3e80d8" stroke="#fff" stroke-width="1.500"/></svg>Ask a n...</button>
  <button class="app" aria-label="SolidWorks"><svg><use href="#sw"/></svg></button>
  <button class="app" aria-label="Pro tool"><svg viewBox="0 0 26 26"><path d="M2 4h22v20H2z" fill="#f4f4f0"/><path d="M10 4l5 1-1 7 6 5H7l4-5z" fill="#e0b030" stroke="#6a5010"/><path d="M4 18h10" stroke="#222" stroke-width="2"/><text x="13" y="23" font-size="6" fill="#222">PRO</text></svg></button>
  <button class="app" aria-label="Skype"><svg viewBox="0 0 26 26"><circle cx="9" cy="9" r="8" fill="#12a5e4"/><circle cx="17" cy="17" r="8" fill="#12a5e4"/><circle cx="13" cy="13" r="10" fill="#17aeec"/><path d="M17 9q-4-3-7 0-1 3 3 4t4 3q-2 4-8 1" fill="none" stroke="#fff" stroke-width="2.600"/></svg></button>
  <button class="app" aria-label="Editor"><svg viewBox="0 0 26 26"><rect x="1" y="2" width="24" height="22" rx="3" fill="#e8dcb0"/><path d="M3 14L16 4l6 4-12 9z" fill="#2c2c2c"/><path d="M4 20l12-4 7 5H6z" fill="#d8a030"/></svg></button>
  <button class="app" aria-label="Hamachi"><svg viewBox="0 0 26 26"><circle cx="13" cy="13" r="12" fill="#7cb4d4"/><circle cx="13" cy="13" r="9.500" fill="#e8643a"/><path d="M9 7v12M9 14q4-4 8 0v5M13 19v-4" fill="none" stroke="#fff" stroke-width="2.200"/></svg></button>
  <button class="app" aria-label="uTorrent"><svg viewBox="0 0 26 26"><circle cx="13" cy="13" r="12.500" fill="#fff"/><circle cx="13" cy="13" r="11" fill="#2c9c48"/><path d="M8 6l3 10q4 2 5-1L14 6M17 15q1 2 4 1M9 12l3 11" fill="none" stroke="#fff" stroke-width="2.600"/></svg></button>
  <button class="app" aria-label="Matlab"><svg viewBox="0 0 26 26"><path d="M1 15l7-3 5 4-5 5z" fill="#4a94c8"/><path d="M8 12q5-3 8-9 3 2 8 18-5-4-8 2-2-5-5-5z" fill="#d8582a"/><path d="M16 3q3 2 8 18-4-3-6-1z" fill="#8c2c1c"/></svg></button>
  <button class="task lit"><svg viewBox="0 0 24 24"><path d="M2 14Q2 4 12 4t9 8q-1 4-5 3t-3 4Q4 23 2 14z" fill="#e8eef4" stroke="#8aa0b8"/><circle cx="7" cy="10" r="1.800" fill="#d03c30"/><circle cx="12" cy="7" r="1.800" fill="#3c9c40"/><circle cx="6" cy="15" r="1.800" fill="#3c6cd0"/><circle cx="10" cy="18" r="1.800" fill="#e8b030"/><path d="M21 1l-4 22" stroke="#b8642c" stroke-width="2.500"/></svg>Engravi...</button>
  <button class="app" aria-label="Calculator"><svg viewBox="0 0 26 26"><rect x="5" y="2" width="17" height="23" rx="1" fill="#dceaf4" stroke="#88a8c4"/><path d="M7 5h13v4H7z" fill="#6ca8d8"/><path d="M8 12h11M8 16h11M8 20h11" stroke="#7c98b4" stroke-width="2" stroke-dasharray="3 1"/></svg></button>
  <button class="app" aria-label="Word"><svg viewBox="0 0 26 26"><path d="M6 2h17v20H6z" fill="#fff" stroke="#5c88c8" transform="rotate(5 13 13)"/><path d="M1 6l14-2v15L1 18z" fill="#2c5cac"/><path d="M4 8l2 7 2-6 2 6 2-8" fill="none" stroke="#fff" stroke-width="1.600"/><path d="M16 9h6M16 12h6M16 15h6" stroke="#88a8d8"/></svg></button>
  <button class="app" aria-label="Sigma"><svg viewBox="0 0 26 26"><path d="M3 2h19v5h-2q-1-2-4-2h-5l6 8-8 8h8q3 0 4-3h2l-1 6H2v-3l8-8-7-8z" fill="#2e98e4" stroke="#166cb4"/></svg></button>
  <button class="app" aria-label="Spades"><svg viewBox="0 0 26 26"><path d="M13 1q2 5 9 10 4 8-4 8-3 0-4-2l2 7h-6l2-7q-1 2-4 2-8 0-4-8 7-5 9-10z" fill="#d8242a" stroke="#8c1014"/><path d="M13 8l1 3h3l-2 2 1 3-3-2-3 2 1-3-2-2h3z" fill="#fff"/></svg></button>
  <button class="app" aria-label="Excel"><svg viewBox="0 0 26 26"><path d="M6 2h18v20H6z" fill="#fff" stroke="#5ca060"/><path d="M1 5h15v15H1z" fill="#3c9244"/><path d="M4 8l8 9M12 8l-8 9" stroke="#fff" stroke-width="2.200"/><path d="M17 8h6M17 12h6M17 16h6M20 5v15" stroke="#78b87c"/></svg></button>
  <button class="task active"><svg><use href="#sw"/></svg>SolidW...</button>
  <button class="task photo"><svg viewBox="0 0 24 24"><path d="M1 3h22v18H1z" fill="#5ca4d4" stroke="#bcd8ec"/><path d="M3 5h18v8H3z" fill="#a8dcf4"/><path d="M3 14q6-5 18-1v6H3z" fill="#2c7864"/></svg>Engravi...</button>
  <div class="tray"><span class="lang">EN</span><i class="caret upc"></i><span class="hot">46</span><span>46</span><span>44</span><span>44</span><span>43</span><span>45</span>
    <svg class="i" viewBox="0 0 12 12"><path d="M2 1h5v9H2z" fill="#222" stroke="#eee"/><path d="M9 3v8M8 2v3h3V2" stroke="#eee" fill="none"/><path d="M1 6l5 5M6 6l-5 5" stroke="#e03020" stroke-width="2"/></svg>
    <svg class="i" viewBox="0 0 12 12"><path d="M4 4h7v5H4z" fill="#445" stroke="#eee"/><path d="M6 11h4M1 1v4h3M1 2h3" stroke="#eee" fill="none"/></svg>
    <svg class="i" viewBox="0 0 12 12"><path d="M1 4h3l4-4v12L4 8H1z" fill="#eee"/><path d="M10 4v4" stroke="#bbb"/></svg>
  </div>
  <time class="clock">2:37 AM<br>18-Jan-12</time>
  <button class="desk" aria-label="Show desktop"></button>
</nav>
<div class="mark"><span class="cjk">素材天下</span><span>sucaisucai.com</span><span class="cjk no">编号：</span><span>07729693</span></div>
</body>
</html>
```
FILE: styles.css
```css
* { box-sizing: border-box; }
html, body { height: 100%; }
body {
  margin: 0;
  display: flex;
  flex-direction: column;
  position: relative;
  min-width: 1000px;
  overflow: hidden;
  background: #e1e3ed;
  color: #222;
  font: 9px/11px "Noto Sans", "Open Sans", "Noto Sans CJK SC", sans-serif;
}
button, input { font: inherit; color: inherit; background: none; border: 0; padding: 0; margin: 0; }
button { display: flex; align-items: center; justify-content: center; white-space: nowrap; }
ul, h1, h2, p { margin: 0; padding: 0; list-style: none; font-weight: normal; font-size: 9px; }
svg { display: block; flex: none; }
.defs { position: absolute; width: 0; height: 0; }
.i { width: 11px; height: 11px; }
.i8 { width: 8px; height: 8px; }
.i10 { width: 10px; height: 10px; }
.i14, .i16 { width: 15px; height: 15px; }
.caret { flex: none; width: 0; height: 0; border: 2px solid transparent; border-top-color: #33384e; border-bottom: 0; }
.caret.dark { border-width: 3px 3px 0; border-top-color: #000; }

/* Title bar */
.titlebar {
  flex: none; height: 23px; display: flex; align-items: center;
  background: linear-gradient(#e6e9f8, #d9dcef 40%, #c3c6da);
  border-bottom: 1px solid #8d91a3;
}
.brand { width: 83px; height: 22px; display: flex; align-items: center; gap: 1px; padding-left: 1px; border-right: 5px solid #7d82a6; font: 10px/12px "DejaVu Sans Condensed", "DejaVu Sans", sans-serif; color: #3b3d48; background: linear-gradient(#d6d8e6, #c3c5d4); }
.brand b { color: #111; }
.menu { display: flex; align-items: center; justify-content: space-between; width: 220px; height: 22px; padding: 0 3px 0 6px; border-right: 1px solid #8d91a3; color: #33365a; }
.quick { display: flex; align-items: center; height: 22px; padding-left: 4px; }
.quick button { width: 26px; justify-content: flex-start; gap: 5px; }
.quick .selectbtn, .selectbtn { width: 26px; height: 17px; padding-left: 2px; gap: 6px; border: 1px solid #7c80a4; border-radius: 2px; background: linear-gradient(90deg, #b0b2d2 66%, #7c80a4 66%, #7c80a4 70%, #d6d8ea 70%); }
.quick .solo { width: 19px; justify-content: center; }
.doc { flex: 1; text-align: center; color: #33365a; }
.search { width: 158px; height: 18px; display: flex; align-items: center; gap: 6px; padding: 0 3px; background: #fff; border: 1px solid #73778c; border-radius: 3px; font-size: 8px; }
.search input { flex: 1; min-width: 0; outline: 0; }
.search input::placeholder { color: #5c5e68; opacity: 1; }
.search button { gap: 3px; }
.winctl { display: flex; align-items: center; justify-content: space-between; width: 70px; padding: 0 5px 4px 7px; }
.help { font-weight: bold; color: #5c6075; }

/* Ribbon */
.ribbon {
  flex: none; height: 57px; display: grid;
  grid-template-columns: 49px 43px 104px 45px 32px 41px 80px 24px 32px 54px 50px 59px 93px 47px 32px 48px 1fr;
  background: linear-gradient(#fdfdff, #f1f2f9 50%, #d6d8e8);
  border-bottom: 1px solid #6d7188;
  color: #3a3c66; line-height: 10px; font-size: 8px;
}
.ribbon .col { display: grid; grid-template-rows: repeat(3, 18px); align-content: start; padding: 1px 0 0 1px; min-width: 0; }
.ribbon .col button { justify-content: flex-start; gap: 7px; }
.ribbon .end, .ribbon .endb { border-right: 1px solid #c9ccd9; }
.ribbon button:disabled { color: #8e909e; }
.big { flex-direction: column; justify-content: flex-start; padding-top: 4px; height: 55px; min-width: 0; }
.big.low { padding-top: 8px; }
.big .caret { margin-top: auto; margin-bottom: 4px; }
.ds { width: 48px; height: 44px; justify-self: end; margin: 1px 3px 0 0; }

/* Work area */
.work { flex: 1; min-height: 0; display: grid; grid-template: 13px minmax(0, 1fr) / 156px minmax(0, 1fr) 210px; background: #c2c2c2; }
.cmdtabs { grid-area: 1 / 1 / 2 / 3; z-index: 1; justify-self: start; display: flex; font: 9px/11px "Liberation Sans", Arial, sans-serif; }
.cmdtabs button { height: 12px; padding: 0 5px; background: #c3c5d6; border: solid #6d7188; border-width: 0 1px 1px 0; color: #5d6072; }
.cmdtabs .on { background: #f3f4fa; color: #1c1c28; font-weight: bold; border-bottom-color: #f3f4fa; }

.left { grid-area: 2 / 1; min-height: 0; display: flex; flex-direction: column; background: #e1e3ed; border: solid #74788f; border-width: 1px 2px 0 0; }
.ptabs { display: flex; height: 17px; padding: 2px 4px 0 0; background: #ced1e8; border-bottom: 1px solid #9a9eb8; }
.ptabs button { width: 18px; height: 15px; border: 1px solid #9a9eb8; border-width: 1px 1px 0 0; border-radius: 3px 3px 0 0; background: #bcbfd6; }
.ptabs .on { background: #e8eaf4; }
.more { margin-left: auto; font-size: 11px; line-height: 14px; color: #555a70; }
.filter { display: flex; align-items: center; height: 12px; margin: 1px 0; padding-left: 5px; background: linear-gradient(#d9dcf0, #fff); border: 1px solid #8f93b4; border-radius: 6px; }
.filter input { flex: 1; min-width: 0; outline: 0; height: 9px; }
.tree { height: 276px; display: flex; flex-direction: column; justify-content: space-between; border-bottom: 2px solid #5c7ca8; position: relative; }
.tree::before { content: ""; position: absolute; left: 6px; top: 14px; bottom: 6px; border-left: 1px dotted #9a9eac; }
.tree li { display: flex; align-items: center; gap: 2px; height: 13px; padding-left: 13px; white-space: nowrap; position: relative; }
.tree .root { padding-left: 1px; }
.tree .sub { padding-left: 25px; }
.tree li:not(.root)::before { content: ""; position: absolute; left: 7px; width: 5px; border-top: 1px dotted #9a9eac; }
.tree .sub::before { margin-left: 12px; }
.tree li.plus::before, .rtree li::before { content: "+"; left: 3px; width: 7px; height: 7px; border: 1px solid #a4a8b6; background: #f6f7fb; color: #445; font: 7px/5px "DejaVu Sans", sans-serif; text-align: center; }
.tree li.minus::before { content: "−"; }
.hscroll { margin-top: auto; height: 14px; display: flex; align-items: center; justify-content: space-between; padding: 1px 4px; background: #ececf0; }
.hscroll button { border: 3px solid transparent; }
.hscroll .al { border-right-color: #444; border-left: 0; }
.hscroll .ar { border-left-color: #444; border-right: 0; }
.thumb { width: 101px; height: 12px; margin-right: 28px; border: 1px solid #a4a6b0; border-radius: 1px; background: repeating-linear-gradient(90deg, #666 0 1px, transparent 1px 3px) center / 7px 5px no-repeat, linear-gradient(#f8f8fa, #d3d4da); }

.view { grid-area: 1 / 2 / 3 / 3; position: relative; min-height: 0; background: linear-gradient(#c1c1c1, #d6d6d6 35%, #f0f0f0 72%, #fff); border-bottom: 1px solid #6d7188; }
.model { width: 100%; height: 100%; }
.engrave { font-family: "Noto Sans", "Open Sans", sans-serif; font-weight: bold; fill: url(#cut); stroke: #1e2029; stroke-width: 1; filter: drop-shadow(-2px 3px 0 #a0a3b9); }
.hud { position: absolute; top: 3px; left: 0; right: 6px; display: flex; justify-content: center; gap: 4px; }
.hud button { gap: 1px; }
.docctl { position: absolute; top: 5px; right: 7px; display: flex; gap: 7px; }
.tasktabs { position: absolute; top: 37px; right: 0; width: 15px; }
.tasktabs button { width: 15px; height: 15px; border: 1px solid #7f839c; background: #c3c6da; }
.tasktabs .on { background: #f2f3f9; border-color: #f2f3f9; }
.triad { position: absolute; left: 12px; bottom: 25px; width: 46px; height: 48px; font: 8px "Liberation Sans", Arial, sans-serif; overflow: visible; }
.grip { position: absolute; left: -1px; top: 251px; width: 6px; height: 18px; border: 1px solid #7f839c; border-left: 0; border-radius: 0 3px 3px 0; background: radial-gradient(circle, #444a66 1px, transparent 1px) center / 4px 4px, #dfe1ee; }

.right { grid-area: 1 / 3 / 3 / 4; display: flex; flex-direction: column; background: #e1e3ed; border-left: 2px solid #74788f; }
.right h2 { height: 16px; display: flex; align-items: center; justify-content: space-between; padding: 0 3px 0 5px; font-weight: bold; color: #272a5c; background: linear-gradient(#e9ebf8, #c5c8de); border-bottom: 1px solid #a9adc4; }
.right h2 span { font-size: 11px; font-weight: normal; }
.rtools { height: 18px; display: flex; align-items: center; gap: 4px; padding-left: 3px; background: #d8daec; border-bottom: 1px solid #a9b4cc; }
.rtree { flex: 0 0 152px; padding: 5px 0 0 13px; border-bottom: 3px solid #7b8098; }
.rtree li { display: flex; align-items: center; height: 14px; gap: 3px; position: relative; }
.rtree li::before { position: absolute; left: -10px; }
.drop { height: 50px; margin: 3px 2px 3px 3px; padding-top: 2px; border: 1px solid #55564a; border-radius: 5px; background: #ffff80; text-align: center; font-family: "Liberation Sans", Arial, sans-serif; }
.bar2 { height: 3px; background: linear-gradient(90deg, transparent calc(50% - 7px), #22242e calc(50% - 7px), #22242e calc(50% + 7px), transparent calc(50% + 7px)), #7b8098; }

/* Sheet tabs */
.sheets { flex: none; height: 12px; display: flex; padding-left: 1px; font: 9px/10px "Liberation Sans", Arial, sans-serif; }
.nav { display: flex; width: 52px; height: 11px; }
.nav button { flex: 0 0 12px; height: 11px; border: 1px solid #9598b0; background: #b9bbcf; }
.nav button::before { content: ""; border: 2px solid transparent; border-right-color: #8487a0; border-left: 0; }
.nav .fwd::before { border: 2px solid transparent; border-left-color: #8487a0; border-right: 0; }
.sheet { height: 11px; padding: 0 9px; border: 1px solid #6d7188; border-top: 0; background: #b9bbd0; }
.sheet.on { padding: 0 8px; font-weight: bold; background: #dfe2f0; }
.sheet + .sheet { padding: 0 12px 0 7px; border-left: 0; }
.edge { flex: 1; margin-right: 208px; border-right: 2px solid #74788f; }

/* Bottom toolbar */
.tools { flex: none; height: 20px; display: flex; align-items: center; background: linear-gradient(#f3f4fa, #dfe1ee 40%, #bfc2d8); border-bottom: 1px solid #9498b0; }
.set { display: flex; align-items: center; justify-content: space-around; height: 14px; }
.s13 { width: 197px; padding: 0 2px 0 8px; border-right: 1px solid #9498b0; }
.s4 { width: 62px; padding: 0 2px; border-right: 1px solid #9498b0; }
.s2 { width: 60px; }
.s9 { width: 137px; margin-left: 4px; padding-left: 4px; border-left: 2px dotted #a4a7be; border-right: 1px solid #9498b0; }
.s3 { width: 51px; margin-left: 4px; padding-left: 2px; border-left: 2px dotted #a4a7be; }
.tools .selectbtn { height: 14px; gap: 4px; padding-left: 1px; justify-content: flex-start; }
.s1 { width: 17px; border-right: 1px solid #9498b0; }
.filters { display: grid; grid-template-columns: repeat(26, 1fr); width: 376px; margin-left: 1px; }
.filters button { height: 15px; border: 1px solid #6c7098; border-radius: 3px; background: #b8bbd8; }
.filters .flat { border-color: transparent; background: none; }
.filters svg { width: 11px; height: 11px; }

.status { flex: none; height: 13px; display: flex; align-items: center; padding: 0 9px 0 1px; gap: 8px; background: #cfd1e2; border-top: 1px solid #e6e8f4; color: #25283c; }
.grow { flex: 1; }
.cell { padding: 0 8px; border-left: 1px solid #b2b5ca; border-right: 1px solid #b2b5ca; }
.q { padding: 0 12px 0 3px; border-left: 0; margin-right: 8px; }
.q button { width: 9px; height: 9px; border: 1px solid #3f7a74; background: #eafaf0; color: #169430; font-weight: bold; font-size: 8px; line-height: 8px; }

/* Taskbar */
.taskbar { flex: none; height: 30px; display: flex; align-items: center; color: #fff; border-top: 1px solid #35556e; background: linear-gradient(90deg, #1d4a6c 0, #1c5680 30%, #144a78 60%, #3a5f70 72%, #4c5a62 77%, #2a4f78 82%, #3c4468 88%, #273a5c 94%, #12304c); }
.start { width: 44px; padding-right: 6px; }
.start svg { width: 28px; height: 28px; }
.app { width: 41px; height: 28px; }
.app svg { width: 25px; height: 25px; }
.task { width: 73px; height: 28px; margin: 0 1px; gap: 4px; justify-content: flex-start; padding-left: 3px; border: 1px solid #6c8ca4; border-radius: 2px; background: linear-gradient(#47708e, #28506e); }
.task svg { width: 24px; height: 24px; }
.task.lit { background: linear-gradient(#8fa8bc, #4d7490); }
.task.active { background: linear-gradient(135deg, #cdd2d8, #98a4b0); border-color: #dfe4e8; }
.task.photo { background: linear-gradient(#8a989c, #6a6a5c 70%, #8a7648); }
.tray { flex: 1; display: flex; align-items: center; justify-content: space-between; padding: 0 6px 0 8px; font-size: 8px; }
.lang { font-size: 9px; margin-bottom: 4px; }
.upc { border-style: solid; border-width: 0 3px 3px; border-color: transparent transparent #fff; }
.hot { color: #d8402c; }
.clock { width: 59px; margin-right: 2px; text-align: center; line-height: 13px; }
.desk { width: 9px; height: 29px; border-left: 1px solid #6a7888; background: #1c2430; }

/* Site mark laid over the status area */
.mark { position: absolute; left: 8px; bottom: 11px; display: flex; align-items: center; gap: 7px; pointer-events: none; font: 18px/24px "DejaVu Sans", sans-serif; color: #8f9299; -webkit-text-stroke: 2px #24262c; paint-order: stroke fill; opacity: .8; white-space: nowrap; }
.mark .cjk { font: 19px/24px "Noto Sans CJK SC", sans-serif; }
.mark .no { margin: 0 -7px 0 8px; }
```
